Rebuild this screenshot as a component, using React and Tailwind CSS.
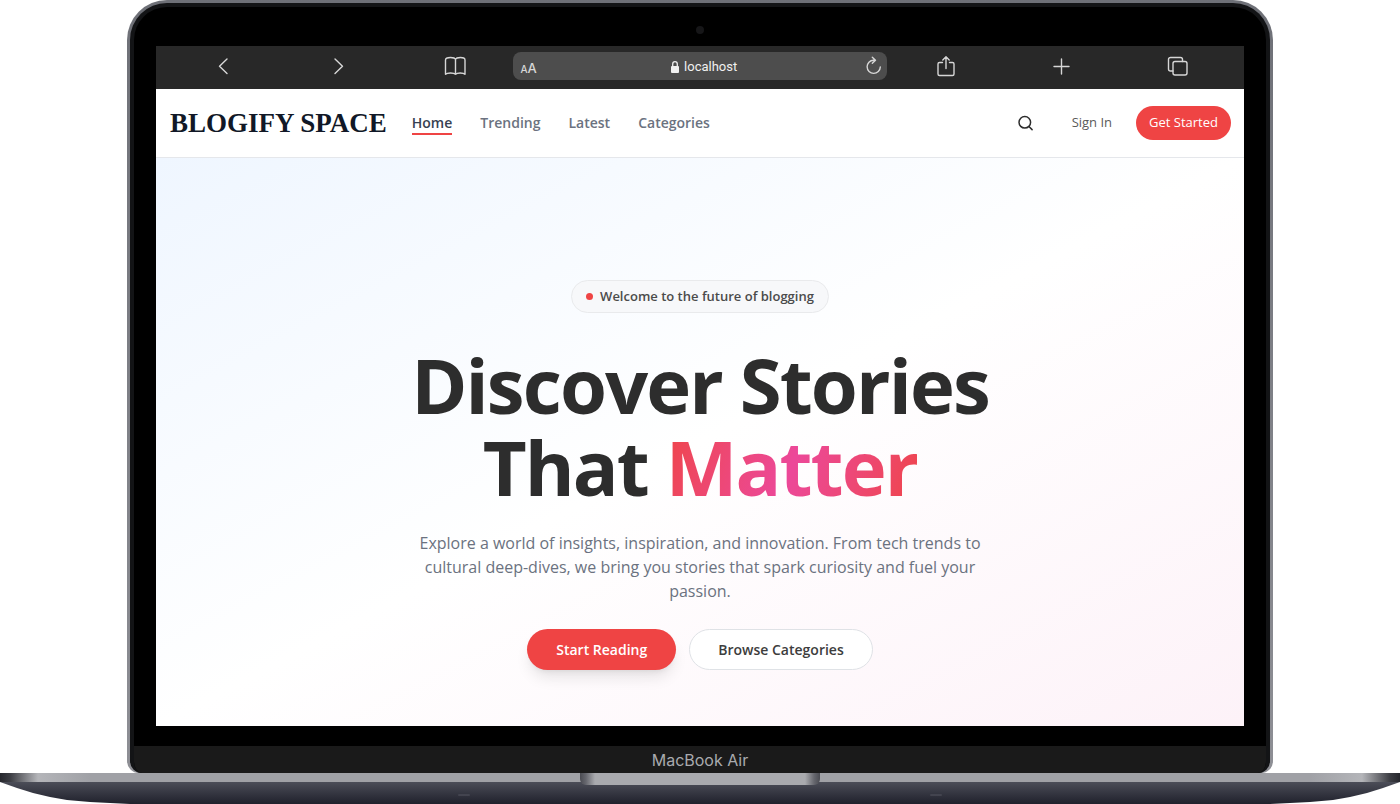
import React from "react";

const navLinks = [
  { label: "Trending", href: "#trending" },
  { label: "Latest", href: "#latest" },
  { label: "Categories", href: "#categories" },
];

const glyph = {
  fill: "none",
  stroke: "currentColor",
  strokeWidth: 1.4,
  strokeLinecap: "round",
  strokeLinejoin: "round",
  "aria-hidden": true,
};

function BrowserBar() {
  return (
    <div className="flex h-[43px] items-center bg-[#282828] pb-[3px] text-[#d6d6d6]">
      <div className="flex flex-1 items-center justify-between pr-[47px] pl-[57px]">
        <button type="button" aria-label="Back">
          <svg width="20" height="20" viewBox="0 0 20 20" {...glyph}>
            <path d="M14 3 6.500 10.300l7.500 7.200" />
          </svg>
        </button>
        <button type="button" aria-label="Forward">
          <svg width="20" height="20" viewBox="0 0 20 20" {...glyph}>
            <path d="M7 3 14.500 10.300 7 17.500" />
          </svg>
        </button>
        <button type="button" aria-label="Reading list">
          <svg width="22" height="20" viewBox="0 0 22 20" {...glyph}>
            <path d="M11.500 3.500C10.800 1.500 8 1.500 6.500 1.500 4 1.500 1.500 2 1.500 4V18.200C3 16.500 10 16.500 11.500 18.200 13 16.500 19.500 16.500 21 18.200V4C21 2 19 1.500 16.500 1.500c-1.500 0-4.300 0-5 2Zm0 0v14.700" />
          </svg>
        </button>
      </div>
      <div className="flex h-7 w-[374px] items-center justify-between rounded-lg bg-[#4d4d4d] pr-1 pl-2">
        <button type="button" aria-label="Text size" className="flex items-baseline pt-[5px] leading-none font-medium">
          <span className="font-['Inter',sans-serif] text-[10px]">A</span>
          <span className="font-['Inter',sans-serif] text-[13px]">A</span>
        </button>
        <div className="flex items-center gap-1 pt-px pl-2 text-[#f0f0f0]">
          <svg width="10" height="14" viewBox="0 0 10 14" aria-hidden="true">
            <rect x="1" y="6" width="8" height="7" rx="1" fill="currentColor" />
            <path d="M2.700 6.500V4a2.300 2.300 0 0 1 4.600 0v2.500" fill="none" stroke="currentColor" strokeWidth="1.300" />
          </svg>
          <span className="font-['Roboto',sans-serif] text-[13px]">localhost</span>
        </div>
        <button type="button" aria-label="Reload">
          <svg width="20" height="20" viewBox="0 0 20 20" {...glyph}>
            <path d="M11.500 4.200H10.500A6.600 6.600 0 1 0 17.300 11M9.300 1.200l3.200 3L9.300 7.200" />
          </svg>
        </button>
      </div>
      <div className="flex flex-1 items-center justify-between pr-[56px] pl-[49px]">
        <button type="button" aria-label="Share">
          <svg width="20" height="22" viewBox="0 0 20 22" {...glyph}>
            <path d="M6.500 7.500H3.500A1.500 1.500 0 0 0 2 9v10A1.500 1.500 0 0 0 3.500 20.500h13a1.500 1.500 0 0 0 1.500-1.500V9A1.500 1.500 0 0 0 16.500 7.500h-3M10 13.500V2M6.800 5 10 1.800 13.200 5" />
          </svg>
        </button>
        <button type="button" aria-label="New tab">
          <svg width="20" height="20" viewBox="0 0 20 20" {...glyph}>
            <path d="M10.500 3v15M3 10.500h15" />
          </svg>
        </button>
        <button type="button" aria-label="Show tabs">
          <svg width="22" height="20" viewBox="0 0 22 20" {...glyph}>
            <rect x="7" y="5.500" width="14" height="13.500" rx="2" />
            <path d="M7 15H4.500a2 2 0 0 1-2-2V3.500a2 2 0 0 1 2-2h10a2 2 0 0 1 2 2v2" />
          </svg>
        </button>
      </div>
    </div>
  );
}

function SiteHeader() {
  return (
    <header className="flex h-[69px] items-center justify-between border-b border-[#e5e7eb] bg-white pr-[13px] pl-[14px]">
      <div className="flex items-center gap-[25px]">
        <a href="#home" className="font-['Liberation_Serif',serif] text-[27px] leading-8 font-bold text-[#111827]">
          BLOGIFY SPACE
        </a>
        <nav className="flex items-center gap-7 pt-px text-[14px] leading-5 font-semibold text-[#6b7280]">
          <a href="#home" className="border-b-2 border-[#ef4444] text-[#374151]">Home</a>
          {navLinks.map((link) => (
            <a key={link.label} href={link.href} className="border-b-2 border-transparent">
              {link.label}
            </a>
          ))}
        </nav>
      </div>
      <div className="flex items-center text-[13px]">
        <button type="button" aria-label="Search" className="mr-9 text-[#2d2d2d]">
          <svg width="18" height="18" viewBox="0 0 18 18" {...glyph} strokeWidth="1.500">
            <circle cx="6.800" cy="8.300" r="5.800" />
            <path d="m11.200 12.700 2.900 2.900" />
          </svg>
        </button>
        <a href="#sign-in" className="mr-6 text-[#5a5a5a]">Sign In</a>
        <button type="button" className="h-[34px] rounded-full bg-[#ef4444] px-[13px] text-white">
          Get Started
        </button>
      </div>
    </header>
  );
}

function Hero() {
  return (
    <main className="flex h-[568px] flex-col items-center bg-linear-to-br from-[#eff6ff] via-white to-[#fdf2f8] pt-[122px] text-center">
      <p className="flex h-[33px] items-center gap-[7px] rounded-full border border-[#e9eaec] bg-[#f7f8fa] px-[14px] text-[13px] font-semibold text-[#4b4b4b]">
        <span className="size-[7px] rounded-full bg-[#ef4444]" />
        Welcome to the future of blogging
      </p>
      <h1 className="mt-[31px] text-[76px] leading-[82px] font-bold tracking-tight text-[#2d2d2d]">
        Discover Stories
        <br />
        That{" "}
        <span className="bg-linear-110 from-[#ef4444] via-[#ec4899] to-[#ef4444] bg-clip-text text-transparent">
          Matter
        </span>
      </h1>
      <p className="mt-[23px] max-w-[580px] text-[16px] leading-6 text-[#6b7280]">
        Explore a world of insights, inspiration, and innovation. From tech trends to cultural
        deep-dives, we bring you stories that spark curiosity and fuel your passion.
      </p>
      <div className="mt-[26px] flex gap-[13px] text-[14px] font-semibold">
        <button type="button" className="h-[41px] rounded-full bg-[#ef4444] px-[29px] text-white shadow-lg">
          Start Reading
        </button>
        <button type="button" className="h-[41px] rounded-full border border-[#dfe2e6] bg-white px-7 text-[#3d3d3d]">
          Browse Categories
        </button>
      </div>
    </main>
  );
}

function LaptopBase() {
  return (
    <div className="bg-linear-to-b from-[#5f616b] to-[#20212c] [clip-path:polygon(0_0,100%_0,100%_9px,calc(100%-17px)_15px,calc(100%-33px)_20px,calc(100%-50px)_24px,calc(100%-67px)_27px,calc(100%-90px)_29px,calc(100%-130px)_31px,130px_31px,90px_29px,67px_27px,50px_24px,33px_20px,17px_15px,0_9px)]">
      <div className="h-[9px] bg-[linear-gradient(to_right,#26272d,#3c3d43_10px,#b4b5b9_38px,#a0a1a6_90px,#a0a1a6_calc(100%-90px),#b4b5b9_calc(100%-38px),#3c3d43_calc(100%-10px),#26272d)]">
        <div className="mx-auto h-[12px] w-60 rounded-b-md bg-[linear-gradient(to_right,#4a4b52,#66676e_6px,#a9aaae_15px,#a9aaae_225px,#66676e_234px,#4a4b52)]" />
      </div>
      <div className="flex h-[22px] items-center justify-between px-[458px] pt-1">
        <span className="h-0.5 w-3 rounded-full bg-[#43444f]" />
        <span className="h-0.5 w-3 rounded-full bg-[#43444f]" />
      </div>
    </div>
  );
}

export default function App() {
  return (
    <div className="min-h-screen overflow-hidden bg-white font-['Open_Sans',sans-serif]">
      <div className="mx-[127px] rounded-t-[40px] rounded-b-[12px] bg-linear-to-b from-[#6e7077] to-[#8e8f95] px-[3px] pt-[3px]">
        <div className="overflow-hidden rounded-t-[37px] rounded-b-[12px] border-x-4 border-t-4 border-[#131416] bg-black">
          <div className="flex h-[39px] items-center justify-center pt-[7px]">
            <span className="size-2 rounded-full bg-[#161618]" />
          </div>
          <div className="mx-[22px]">
            <BrowserBar />
            <SiteHeader />
            <Hero />
          </div>
          <div className="h-5" />
          <div className="flex h-[27px] items-center justify-center bg-[#1a1a1a] pt-px font-['Inter',sans-serif] text-[16px] text-[#a9aaae]">
            MacBook Air
          </div>
        </div>
      </div>
      <LaptopBase />
    </div>
  );
}
